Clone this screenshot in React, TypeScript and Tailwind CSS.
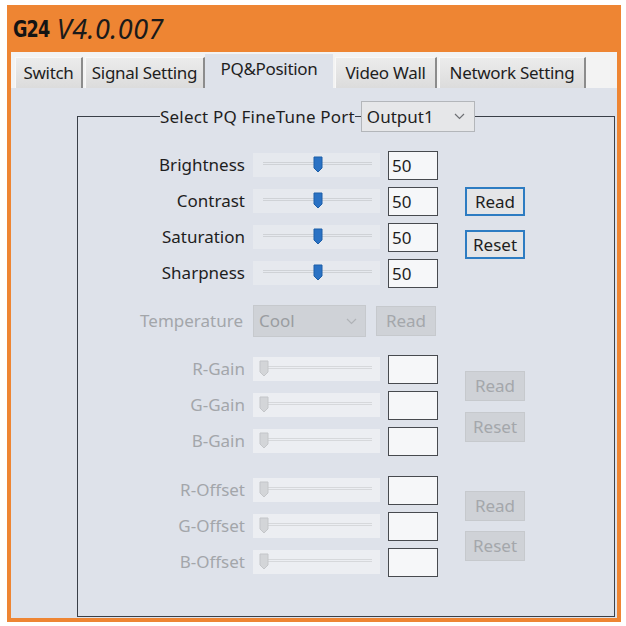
import React from 'react';

const FONT = { fontFamily: '"Noto Sans", "Open Sans", sans-serif' };

const Thumb = ({ enabled }: { enabled: boolean }) => (
  <svg width="10" height="17" viewBox="0 0 10 17">
    <path
      d="M1 1 H9 V12 L5 16 L1 12 Z"
      fill={enabled ? '#2a72c4' : '#d3d5d8'}
      stroke={enabled ? '#1d5fa8' : '#c4c6c9'}
      strokeWidth="1"
    />
  </svg>
);

const Slider = ({ enabled }: { enabled: boolean }) => (
  <div className={`relative w-[127px] h-[24px] ${enabled ? 'bg-[#e6e9ee]' : 'bg-[#eceef2]'}`}>
    <div className={`absolute left-[10px] right-[8px] top-[9px] h-[3px] border-y ${enabled ? 'border-[#cfd2d6]' : 'border-[#d6d8db]'}`} />
    <div className={`absolute top-[3px] ${enabled ? 'left-[60px]' : 'left-[6px]'}`}>
      <Thumb enabled={enabled} />
    </div>
  </div>
);

const Row = ({ label, value, enabled }: { label: string; value?: string; enabled: boolean }) => (
  <div className="flex items-center h-[36px]">
    <div className={`w-[167px] text-right text-[17px] ${enabled ? 'text-[#1e1e1e]' : 'text-[#a3a6aa]'}`}>{label}</div>
    <div className="ml-[8px]">
      <Slider enabled={enabled} />
    </div>
    <div className="ml-[8px] w-[50px] h-[29px] border border-[#474a4f] bg-[#f6f7f9] text-[17px] text-[#1e1e1e] pl-[3px] leading-[27px]">
      {value}
    </div>
  </div>
);

const Btn = ({ label, enabled }: { label: string; enabled: boolean }) =>
  enabled ? (
    <div className="w-[60px] h-[29px] border-2 border-[#2d7cc2] bg-[#e4e5e7] text-[17px] text-[#1e1e1e] flex items-center justify-center">
      {label}
    </div>
  ) : (
    <div className="w-[60px] h-[30px] border border-[#c6c9cd] bg-[#cfd2d7] text-[17px] text-[#a4a7ab] flex items-center justify-center">
      {label}
    </div>
  );

const Chevron = ({ color }: { color: string }) => (
  <svg width="11" height="7" viewBox="0 0 11 7">
    <path d="M1 1 L5.5 5.5 L10 1" fill="none" stroke={color} strokeWidth="1.2" />
  </svg>
);

const tabs = [
  { label: 'Switch', w: 'w-[68px]' },
  { label: 'Signal Setting', w: 'w-[120px]' },
];
const tabsRight = [
  { label: 'Video Wall', w: 'w-[102px]' },
  { label: 'Network Setting', w: 'w-[147px]' },
];

const Tab = ({ label, w }: { label: string; w: string }) => (
  <div
    className={`${w} h-[31px] mr-[2px] bg-gradient-to-b from-[#ececec] to-[#dcdcdc] border-l border-t border-[#f8f8f8] border-r-2 border-r-[#8c8c8c] flex items-center justify-center text-[17px] tracking-[-0.3px] text-[#1e1e1e]`}
  >
    {label}
  </div>
);

export default function App() {
  return (
    <div className="w-[626px] h-[626px] bg-white pt-[5px] pl-[7px]" style={FONT}>
      <div className="w-[614px] h-[617px] border-x-4 border-b-4 border-[#ee8533] flex flex-col">
        {/* title bar */}
        <div className="h-[47px] bg-[#ee8533] flex items-center pl-[2px] pt-[2px]">
          <span
            className="text-[23px] font-black text-[#141414] tracking-[-1px] scale-x-[0.85] origin-left"
            style={{ fontFamily: '"DejaVu Sans Condensed", "DejaVu Sans", sans-serif' }}
          >
            G24
          </span>
          <span className="ml-[1px] text-[27px] italic text-[#1a1a1a] tracking-[0.5px]">V4.0.007</span>
        </div>

        {/* tab strip */}
        <div className="h-[36px] bg-[#f3f3f3] flex items-end pl-[4px]">
          {tabs.map(t => (
            <Tab key={t.label} {...t} />
          ))}
          <div className="w-[128px] h-[34px] -ml-[2px] mr-[2px] bg-[#dee2ea] flex justify-center pt-[2px] text-[17px] tracking-[-0.3px] text-[#1e1e1e]">
            PQ&amp;Position
          </div>
          {tabsRight.map(t => (
            <Tab key={t.label} {...t} />
          ))}
        </div>

        {/* panel */}
        <div className="flex-1 bg-[#dee2ea] pl-[66px] pr-[2px] pt-[13px]">
          <fieldset className="h-[516px] border border-[#3a3f48]">
            <legend className="ml-[82px] flex items-center">
              <span className="text-[17px] tracking-[0.2px] text-[#1e1e1e]">Select PQ FineTune Port</span>
              <span className="w-[6px] h-px bg-[#3a3f48]" />
              <div className="w-[114px] h-[31px] border border-[#b3b6ba] bg-[#e6e7e9] flex items-center justify-between pl-[5px] pr-[9px] text-[17px] text-[#1e1e1e]">
                <span>Output1</span>
                <Chevron color="#6e7074" />
              </div>
            </legend>

            {/* PQ group */}
            <div className="flex mt-[15px]">
              <div className="flex flex-col">
                <Row label="Brightness" value="50" enabled />
                <Row label="Contrast" value="50" enabled />
                <Row label="Saturation" value="50" enabled />
                <Row label="Sharpness" value="50" enabled />
              </div>
              <div className="ml-[27px] pt-[40px] flex flex-col gap-[14px]">
                <Btn label="Read" enabled />
                <Btn label="Reset" enabled />
              </div>
            </div>

            {/* temperature */}
            <div className="flex items-center mt-[14px]">
              <div className="w-[165px] text-right text-[17px] text-[#a3a6aa]">Temperature</div>
              <div className="ml-[10px] w-[113px] h-[32px] bg-[#cfd2d7] border border-[#c6c9cd] flex items-center justify-between pl-[5px] pr-[8px] text-[17px] text-[#9a9da1]">
                <span>Cool</span>
                <Chevron color="#b0b3b7" />
              </div>
              <div className="ml-[10px]">
                <Btn label="Read" enabled={false} />
              </div>
            </div>

            {/* gain group */}
            <div className="flex mt-[14px]">
              <div className="flex flex-col">
                <Row label="R-Gain" enabled={false} />
                <Row label="G-Gain" enabled={false} />
                <Row label="B-Gain" enabled={false} />
              </div>
              <div className="ml-[27px] pt-[20px] flex flex-col gap-[11px]">
                <Btn label="Read" enabled={false} />
                <Btn label="Reset" enabled={false} />
              </div>
            </div>

            {/* offset group */}
            <div className="flex mt-[13px]">
              <div className="flex flex-col">
                <Row label="R-Offset" enabled={false} />
                <Row label="G-Offset" enabled={false} />
                <Row label="B-Offset" enabled={false} />
              </div>
              <div className="ml-[27px] pt-[19px] flex flex-col gap-[10px]">
                <Btn label="Read" enabled={false} />
                <Btn label="Reset" enabled={false} />
              </div>
            </div>
          </fieldset>
        </div>
      </div>
    </div>
  );
}
